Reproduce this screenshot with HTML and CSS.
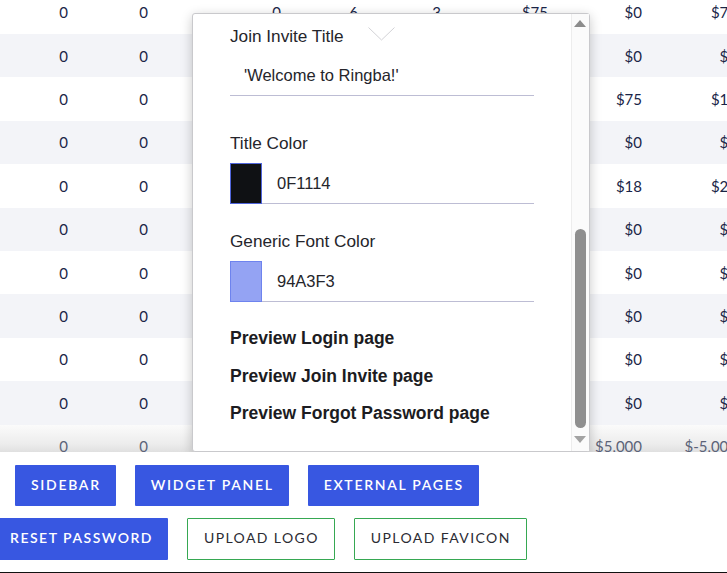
FILE: index.html
```html
<!DOCTYPE html>
<html lang="en">
<head>
    <meta charset="UTF-8">
    <meta name="viewport" content="width=device-width, initial-scale=1.0">
    <title>External Pages</title>
    <link rel="stylesheet" href="styles.css">
</head>
<body>
    <div class="page">
        <div class="report">
            <div class="rows">
                <div class="row"><span>0</span><span>0</span><span>0</span><span>6</span><span>3</span><span>$75</span><span>$0</span><span>$75</span></div>
                <div class="row"><span>0</span><span>0</span><span>0</span><span>2</span><span>0</span><span>$0</span><span>$0</span><span>$0</span></div>
                <div class="row"><span>0</span><span>0</span><span>1</span><span>4</span><span>2</span><span>$50</span><span>$75</span><span>$15</span></div>
                <div class="row"><span>0</span><span>0</span><span>0</span><span>1</span><span>0</span><span>$0</span><span>$0</span><span>$0</span></div>
                <div class="row"><span>0</span><span>0</span><span>0</span><span>3</span><span>1</span><span>$25</span><span>$18</span><span>$25</span></div>
                <div class="row"><span>0</span><span>0</span><span>0</span><span>0</span><span>0</span><span>$0</span><span>$0</span><span>$0</span></div>
                <div class="row"><span>0</span><span>0</span><span>0</span><span>0</span><span>0</span><span>$0</span><span>$0</span><span>$0</span></div>
                <div class="row"><span>0</span><span>0</span><span>0</span><span>0</span><span>0</span><span>$0</span><span>$0</span><span>$0</span></div>
                <div class="row"><span>0</span><span>0</span><span>0</span><span>0</span><span>0</span><span>$0</span><span>$0</span><span>$0</span></div>
                <div class="row"><span>0</span><span>0</span><span>0</span><span>0</span><span>0</span><span>$0</span><span>$0</span><span>$0</span></div>
                <div class="row row-total"><span>0</span><span>0</span><span>1</span><span>16</span><span>6</span><span>$150</span><span>$5,000</span><span>$-5,000</span></div>
            </div>

            <div class="popup">
                <div class="popup-body">
                    <div class="field-label">
                        Join Invite Title
                        <svg class="chevron" width="27" height="14" viewBox="0 0 27 14">
                            <polyline points="0.5,0.5 13.5,13 26.5,0.5" fill="none" stroke="#d2d2d6" stroke-width="1"/>
                        </svg>
                    </div>
                    <div class="text-input">'Welcome to Ringba!'</div>

                    <div class="field-label gap-top">Title Color</div>
                    <div class="color-input">
                        <span class="swatch swatch-dark" style="background: #0F1114;"></span>
                        <span class="color-value">0F1114</span>
                    </div>

                    <div class="field-label gap-top-sm">Generic Font Color</div>
                    <div class="color-input">
                        <span class="swatch swatch-light" style="background: #94A3F3;"></span>
                        <span class="color-value">94A3F3</span>
                    </div>

                    <div class="preview-links">
                        <a class="preview-link">Preview Login page</a>
                        <a class="preview-link">Preview Join Invite page</a>
                        <a class="preview-link">Preview Forgot Password page</a>
                    </div>
                </div>
                <div class="scrollbar">
                    <div class="sb-arrow sb-up"></div>
                    <div class="sb-track"><div class="sb-thumb"></div></div>
                    <div class="sb-arrow sb-down"></div>
                </div>
            </div>
        </div>

        <div class="actions">
            <div class="action-row">
                <button class="btn btn-primary">Sidebar</button>
                <button class="btn btn-primary">Widget Panel</button>
                <button class="btn btn-primary">External Pages</button>
            </div>
            <div class="action-row action-row-second">
                <button class="btn btn-primary">Reset Password</button>
                <button class="btn btn-outline">Upload Logo</button>
                <button class="btn btn-outline">Upload Favicon</button>
            </div>
        </div>
    </div>
</body>
</html>
```

FILE: styles.css
```css
body {
    margin: 0;
    overflow: hidden;
    background: #fff;
    font-family: Lato, "Liberation Sans", Arial, sans-serif;
}

.page {
    width: 727px;
    height: 572px;
    border-bottom: 1px solid #111;
    overflow: hidden;
}

/* report table (scrolled) */

.report {
    position: relative;
    height: 452px;
    overflow: hidden;
}

.rows {
    margin-top: -9.4px;
}

.row {
    display: grid;
    grid-template-columns: 80px 80px 133px 77px 83px 107px 94px 95px;
    height: 43.4px;
    align-items: center;
    font-size: 15px;
    color: #1a2547;
}

.row:nth-child(even) {
    background: #f3f4f8;
}

.row span {
    text-align: right;
    padding-right: 12px;
    white-space: nowrap;
}

.row-total {
    color: #5b6378;
    background: linear-gradient(to bottom, #fbfbfb 0%, #ececec 45%, #c6c6c6 100%) !important;
    align-items: start;
    padding-top: 12px;
    box-sizing: border-box;
}

/* settings popup */

.popup {
    position: absolute;
    top: 13px;
    left: 192px;
    width: 398px;
    height: 439px;
    box-sizing: border-box;
    display: flex;
    background: #fff;
    border: 1px solid #c9c9cc;
    border-radius: 3px;
    box-shadow: 0 3px 12px rgba(0, 0, 0, 0.22);
    font-family: "Liberation Sans", Arial, sans-serif;
    color: #25252b;
}

.popup-body {
    flex: 1;
    padding: 12px 37px 0;
}

.field-label {
    display: flex;
    align-items: center;
    gap: 24px;
    font-size: 17.2px;
    line-height: 20px;
}

.chevron {
    margin-top: -4px;
}

.gap-top {
    margin-top: 37px;
}

.gap-top-sm {
    margin-top: 27px;
}

.text-input {
    margin-top: 9px;
    height: 40px;
    line-height: 40px;
    padding-left: 14px;
    font-size: 16.5px;
    border-bottom: 1px solid #bdbdd4;
}

.color-input {
    display: flex;
    margin-top: 10px;
    height: 41px;
}

.swatch {
    width: 32px;
    height: 41px;
    box-sizing: border-box;
    border: 1px solid #5066dc;
}

.swatch-light {
    border-color: #6e83ee;
}

.color-value {
    flex: 1;
    padding-left: 15px;
    line-height: 40px;
    font-size: 16.5px;
    border-bottom: 1px solid #bdbdd4;
}

.preview-links {
    margin-top: 18px;
}

.preview-link {
    display: block;
    font-size: 17.5px;
    font-weight: bold;
    line-height: 37.5px;
    color: #1c1c22;
}

/* fake scrollbar */

.scrollbar {
    width: 17px;
    display: flex;
    flex-direction: column;
    border-left: 1px solid #ededed;
    background: #fbfbfb;
}

.sb-arrow {
    height: 20px;
    position: relative;
}

.sb-arrow::after {
    content: "";
    position: absolute;
    left: 2px;
    border-left: 6.5px solid transparent;
    border-right: 6.5px solid transparent;
}

.sb-up::after {
    top: 6px;
    border-bottom: 7px solid #8c8c8c;
}

.sb-down::after {
    top: 5px;
    border-top: 7px solid #a3a3a3;
}

.sb-track {
    flex: 1;
    display: flex;
    flex-direction: column;
    align-items: center;
}

.sb-thumb {
    margin-top: auto;
    margin-bottom: 3px;
    width: 11px;
    height: 199px;
    border-radius: 6px;
    background: #8f8f8f;
}

/* buttons */

.actions {
    padding-top: 13px;
}

.action-row {
    display: flex;
    gap: 19px;
    padding-left: 15px;
}

.action-row-second {
    margin-top: 12px;
    padding-left: 0;
    margin-left: -6px;
}

.btn {
    height: 41px;
    padding: 0 15px 2px 16px;
    box-sizing: border-box;
    font-family: Lato, "Liberation Sans", sans-serif;
    font-size: 14px;
    letter-spacing: 1.7px;
    text-transform: uppercase;
    border-radius: 1px;
    cursor: pointer;
}

.btn-primary {
    background: #3857e1;
    color: #fff;
    font-weight: 600;
    border: none;
}

.action-row-second .btn {
    height: 42px;
    padding-bottom: 3px;
}

.action-row-second .btn-primary {
    letter-spacing: 1.5px;
}

.btn-outline {
    background: #fff;
    color: #2b2b33;
    letter-spacing: 1.4px;
    border: 1px solid #36a852;
}
```
